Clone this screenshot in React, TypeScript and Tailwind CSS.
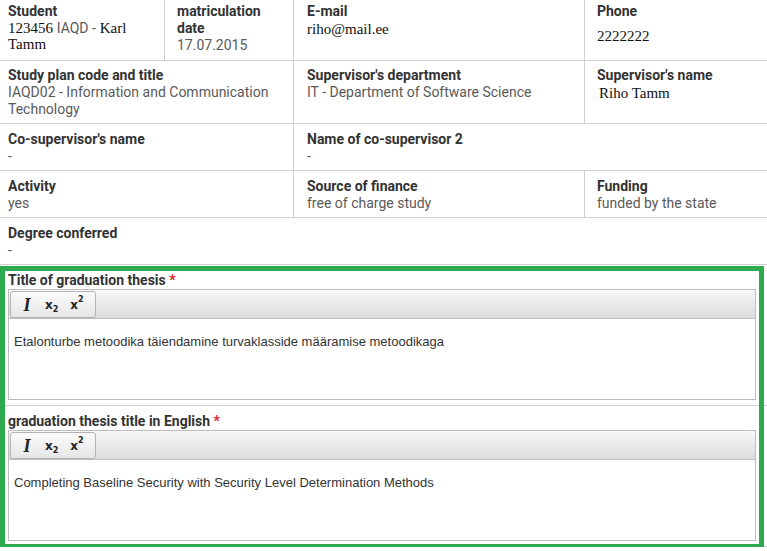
const serif = "font-['Liberation_Serif',serif] text-[15px] leading-[16px] text-[#111]";

const Label = ({ children }: { children: React.ReactNode }) => (
  <div className="font-bold text-[#333]">{children}</div>
);

const Value = ({ children }: { children: React.ReactNode }) => (
  <div className="text-[#5a5a5a]">{children}</div>
);

const Toolbar = () => (
  <div className="h-[30px] border border-[#bdbdbd] bg-gradient-to-b from-[#f7f7f7] to-[#dcdcdc] px-[1px] pt-[1px]">
    <div className="flex h-[27px] w-[86px] items-center rounded-[3px] border border-[#b3b3b3] bg-gradient-to-b from-[#fbfbfb] to-[#e6e6e6]">
      <span className="ml-[9px] w-[14px] text-center font-['Liberation_Serif',serif] text-[18px] font-bold italic leading-none text-[#222]">
        I
      </span>
      <span className="ml-[11px] flex items-end font-['DejaVu_Sans',sans-serif] text-[12px] font-bold leading-none text-[#222]">
        x<span className="mb-[-3px] text-[8px]">2</span>
      </span>
      <span className="ml-[12px] flex items-start font-['DejaVu_Sans',sans-serif] text-[12px] font-bold leading-none text-[#222]">
        x<span className="mt-[-3px] text-[8px]">2</span>
      </span>
    </div>
  </div>
);

const EditorField = ({ label, text }: { label: string; text: string }) => (
  <div className="border-b border-[#d0d0d0] pl-[8px] pr-[11px] pt-[7px] pb-[5px]">
    <div className="font-bold text-[#333]">
      {label} <span className="text-[#d9262c]">*</span>
    </div>
    <Toolbar />
    <div className="h-[81px] border border-t-0 border-[#bdbdbd] bg-white px-[5px] pt-[14px] font-['Liberation_Sans',sans-serif] text-[13px] leading-[18px] text-[#333]">
      {text}
    </div>
  </div>
);

const App = () => {
  return (
    <div className="relative w-[767px] bg-white font-['Roboto',sans-serif] text-[14px] leading-[17px]">
      {/* row 1 */}
      <div className="grid h-[61px] grid-cols-[165px_129px_291px_1fr] border-b border-[#d0d0d0]">
        <div className="border-r border-[#d0d0d0] pl-[8px] pr-[4px] pt-[3px]">
          <Label>Student</Label>
          <div className={serif}>
            123456 <span className="font-['Roboto',sans-serif] text-[14px] leading-[16px] text-[#5a5a5a]">IAQD -</span> Karl Tamm
          </div>
        </div>
        <div className="border-r border-[#d0d0d0] pl-[12px] pr-[4px] pt-[3px]">
          <Label>matriculation date</Label>
          <Value>17.07.2015</Value>
        </div>
        <div className="border-r border-[#d0d0d0] pl-[13px] pt-[3px]">
          <Label>E-mail</Label>
          <div className={serif + " mt-[1px]"}>riho@mail.ee</div>
        </div>
        <div className="pl-[12px] pt-[3px]">
          <Label>Phone</Label>
          <div className={serif + " mt-[8px]"}>2222222</div>
        </div>
      </div>

      {/* row 2 */}
      <div className="grid h-[63px] grid-cols-[294px_291px_1fr] border-b border-[#d0d0d0]">
        <div className="border-r border-[#d0d0d0] pl-[8px] pr-[16px] pt-[6px]">
          <Label>Study plan code and title</Label>
          <Value>IAQD02 - Information and Communication Technology</Value>
        </div>
        <div className="border-r border-[#d0d0d0] pl-[13px] pt-[6px]">
          <Label>Supervisor's department</Label>
          <Value>IT - Department of Software Science</Value>
        </div>
        <div className="pl-[12px] pt-[6px]">
          <Label>Supervisor's name</Label>
          <div className={serif + " ml-[2px] mt-[1px]"}>Riho Tamm</div>
        </div>
      </div>

      {/* row 3 */}
      <div className="grid h-[47px] grid-cols-[294px_1fr] border-b border-[#d0d0d0]">
        <div className="border-r border-[#d0d0d0] pl-[8px] pt-[7px]">
          <Label>Co-supervisor's name</Label>
          <Value>-</Value>
        </div>
        <div className="pl-[13px] pt-[7px]">
          <Label>Name of co-supervisor 2</Label>
          <Value>-</Value>
        </div>
      </div>

      {/* row 4 */}
      <div className="grid h-[47px] grid-cols-[294px_291px_1fr] border-b border-[#d0d0d0]">
        <div className="border-r border-[#d0d0d0] pl-[8px] pt-[7px]">
          <Label>Activity</Label>
          <Value>yes</Value>
        </div>
        <div className="border-r border-[#d0d0d0] pl-[13px] pt-[7px]">
          <Label>Source of finance</Label>
          <Value>free of charge study</Value>
        </div>
        <div className="pl-[12px] pt-[7px]">
          <Label>Funding</Label>
          <Value>funded by the state</Value>
        </div>
      </div>

      {/* row 5 */}
      <div className="h-[47px] border-b border-[#d0d0d0] pl-[8px] pt-[7px]">
        <Label>Degree conferred</Label>
        <Value>-</Value>
      </div>

      <EditorField
        label="Title of graduation thesis"
        text="Etalonturbe metoodika täiendamine turvaklasside määramise metoodikaga"
      />
      <EditorField
        label="graduation thesis title in English"
        text="Completing Baseline Security with Security Level Determination Methods"
      />

      {/* highlight */}
      <div className="pointer-events-none absolute left-0 top-[266px] h-[283px] w-[764px] border-[5px] border-[#2eaa4f]" />
    </div>
  );
};

export default App;
